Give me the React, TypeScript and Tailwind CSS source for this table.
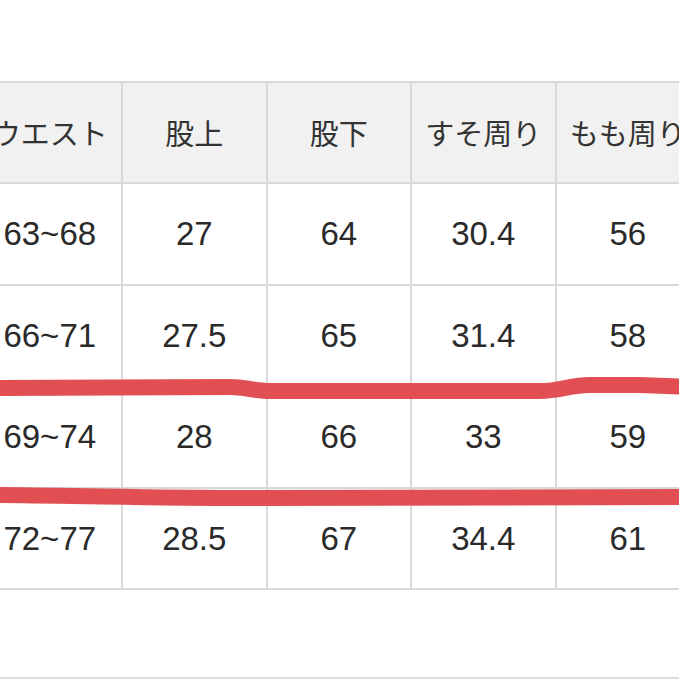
import React from "react";

const headers = ["ウエスト", "股上", "股下", "すそ周り", "もも周り", ""];

const rows = [
  ["63~68", "27", "64", "30.4", "56", ""],
  ["66~71", "27.5", "65", "31.4", "58", ""],
  ["69~74", "28", "66", "33", "59", ""],
  ["72~77", "28.5", "67", "34.4", "61", ""],
];

const App = () => {
  return (
    <div className="relative w-[679px] h-[679px] overflow-hidden bg-white">
      <div className="pt-[81px]">
        {/* Size table */}
        <div className="ml-[-23.5px] w-max bg-[#d9d9d9] p-[2px]">
          <div className="grid grid-cols-[repeat(6,142.5px)] gap-[2px]">
            {headers.map((h, i) => (
              <div
                key={"h" + i}
                className="h-[99.4px] bg-[#f1f1f1] flex items-center justify-center text-[29px] text-[#333] font-['Noto_Sans_CJK_JP',sans-serif]"
              >
                {h}
              </div>
            ))}
            {rows.map((row, r) =>
              row.map((c, i) => (
                <div
                  key={r + "-" + i}
                  className="h-[99.4px] bg-white flex items-center justify-center text-[33px] text-[#2a2a2a] font-['Liberation_Sans',Arial,sans-serif]"
                >
                  {c}
                </div>
              ))
            )}
          </div>
        </div>
        <div className="mt-[87px] border-t-2 border-[#dcdcdc]" />
      </div>

      {/* Hand-drawn red marks */}
      <svg
        className="absolute inset-0 pointer-events-none"
        width="679"
        height="679"
        viewBox="0 0 679 679"
      >
        <path
          d="M-5 388 L230 387 C245 387 255 391 270 391 L540 391 C560 391 570 385 590 385 L640 385 L690 387"
          fill="none"
          stroke="#e14f52"
          strokeWidth="16"
        />
        <path
          d="M-5 495 C100 496 150 498 250 498 L690 497"
          fill="none"
          stroke="#e14f52"
          strokeWidth="16"
        />
      </svg>
    </div>
  );
};

export default App;
